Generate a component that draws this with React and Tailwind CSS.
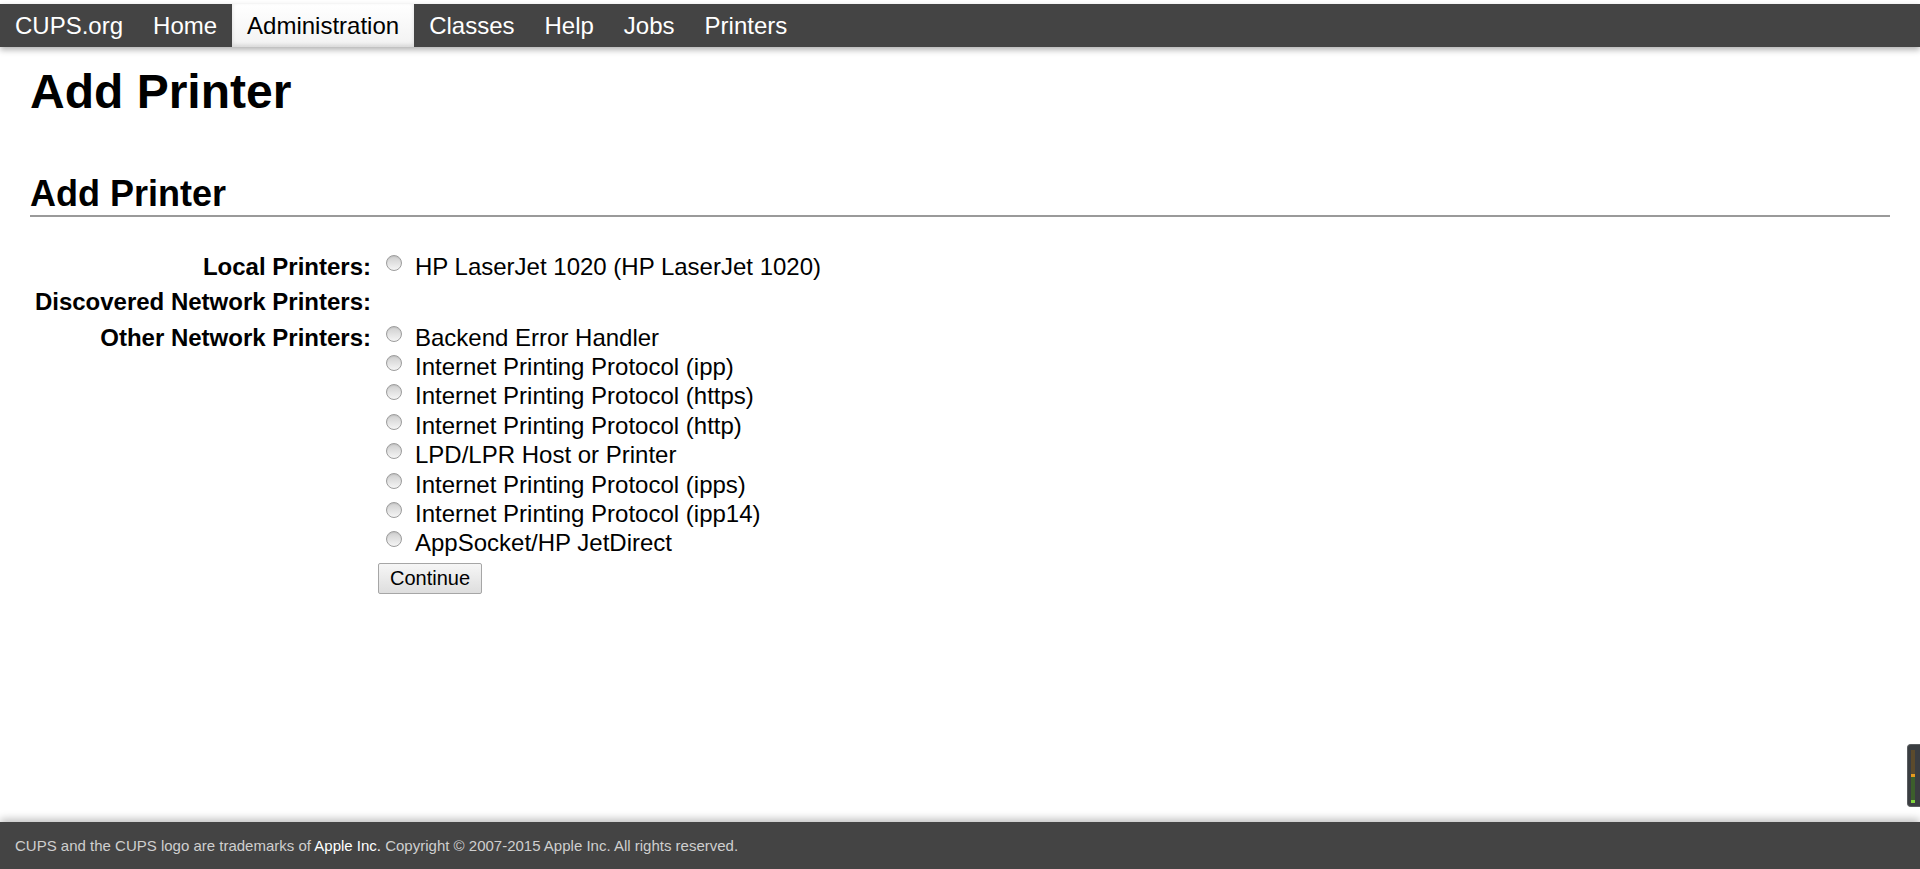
import React, { useState } from 'react';

const navItems = ['CUPS.org', 'Home', 'Administration', 'Classes', 'Help', 'Jobs', 'Printers'];

const otherPrinters = [
  'Backend Error Handler',
  'Internet Printing Protocol (ipp)',
  'Internet Printing Protocol (https)',
  'Internet Printing Protocol (http)',
  'LPD/LPR Host or Printer',
  'Internet Printing Protocol (ipps)',
  'Internet Printing Protocol (ipp14)',
  'AppSocket/HP JetDirect',
];

const Radio = ({ label, value, selected, onSelect }) => (
  <label className="flex items-start h-[29.4px] leading-[29.4px] cursor-default">
    <input
      type="radio"
      name="device"
      checked={selected === value}
      onChange={() => onSelect(value)}
      className="appearance-none shrink-0 w-[16px] h-[16px] mt-[3px] ml-[8px] mr-[13px] rounded-full border border-[#9c9c9c] bg-linear-to-b from-[#cfcfcf] to-[#f5f5f5] shadow-[inset_0_1px_1px_rgba(0,0,0,0.08)] checked:from-[#5a5a5a] checked:to-[#8a8a8a]"
    />
    <span className="whitespace-nowrap">{label}</span>
  </label>
);

const App = () => {
  const [selected, setSelected] = useState(null);

  return (
    <div className="relative h-screen flex flex-col bg-white text-black pt-[4px] overflow-hidden font-['Liberation_Sans',Arial,sans-serif]">
      <nav className="relative z-10 h-[43px] shrink-0 flex bg-[#444] shadow-[0_3px_6px_rgba(0,0,0,0.3)]">
        {navItems.map((item) =>
          item === 'Administration' ? (
            <span
              key={item}
              className="px-[15px] text-[24px] leading-[43px] text-black bg-linear-to-b from-[#ffffff] to-[#f2f2f2] shadow-[inset_0_-2px_4px_rgba(0,0,0,0.12)]"
            >
              {item}
            </span>
          ) : (
            <span key={item} className="px-[15px] text-[24px] leading-[43px] text-white">
              {item}
            </span>
          )
        )}
      </nav>

      <main className="flex-1 px-[30px]">
        <h1 className="mt-[17px] text-[48px] leading-[56px] font-bold">Add Printer</h1>
        <h2 className="mt-[53px] text-[36px] leading-[42px] font-bold border-b-2 border-[#9a9a9a]">Add Printer</h2>

        <div className="mt-[35px] text-[24px]">
          <div className="flex h-[35.3px]">
            <div className="w-[341px] text-right font-bold leading-[29.4px]">Local Printers:</div>
            <div className="pl-[7px]">
              <Radio label="HP LaserJet 1020 (HP LaserJet 1020)" value="local" selected={selected} onSelect={setSelected} />
            </div>
          </div>
          <div className="flex h-[35.3px]">
            <div className="w-[341px] text-right font-bold leading-[29.4px]">Discovered Network Printers:</div>
          </div>
          <div className="flex">
            <div className="w-[341px] text-right font-bold leading-[29.4px]">Other Network Printers:</div>
            <div className="pl-[7px] flex flex-col">
              {otherPrinters.map((p) => (
                <Radio key={p} label={p} value={p} selected={selected} onSelect={setSelected} />
              ))}
              <div>
                <button className="mt-[5px] h-[31px] w-[104px] text-[20px] leading-none text-black border border-[#a6a6a6] rounded-[2px] bg-linear-to-b from-[#f6f6f6] to-[#dedede]">
                  Continue
                </button>
              </div>
            </div>
          </div>
        </div>
      </main>

      <footer className="relative z-10 h-[47px] shrink-0 flex items-center px-[15px] pt-[2px] bg-[#444] text-[15px] text-[#cfcfcf] shadow-[0_-3px_8px_rgba(0,0,0,0.25)]">
        <span>
          CUPS and the CUPS logo are trademarks of <span className="text-white">Apple Inc.</span> Copyright © 2007-2015 Apple Inc. All rights reserved.
        </span>
      </footer>

      <div className="absolute right-0 top-[744px] w-[13px] h-[63px] rounded-l-[4px] bg-[#3a3d41] border border-r-0 border-[#5a5d60] z-20">
        <div className="absolute left-[3px] top-[5px] w-[4px] h-[24px] bg-[#5b4a2c]" />
        <div className="absolute left-[3px] top-[29px] w-[4px] h-[3px] bg-[#e69a1e]" />
        <div className="absolute left-[3px] top-[32px] w-[4px] h-[24px] bg-[#3c5f2c]" />
        <div className="absolute left-[3px] top-[55px] w-[4px] h-[3px] bg-[#7fd23c]" />
      </div>
    </div>
  );
};

export default App;
